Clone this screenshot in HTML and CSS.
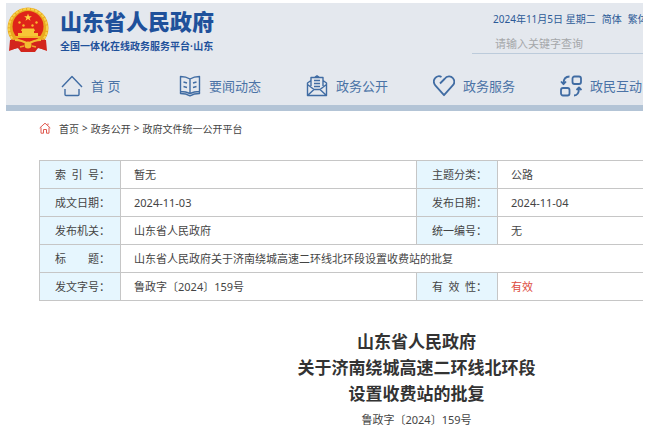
FILE: index.html
```html
<!DOCTYPE html>
<html lang="zh-CN">
<head>
<meta charset="utf-8">
<title>山东省人民政府</title>
<link rel="stylesheet" href="styles.css">
</head>
<body>
<div class="page">
  <header class="header">
    <div class="masthead">
      <a class="brand" href="#">
        <svg class="emblem" viewBox="0 0 42 46" aria-hidden="true">
          <path d="M5 29 L37 29 L39 43 L31 41 L28 45 L14 45 L11 41 L3 43Z" fill="#d3251c"/>
          <circle cx="21" cy="21" r="20.500" fill="#e9a91f"/>
          <circle cx="21" cy="21" r="19" fill="none" stroke="#f7d04a" stroke-width="2" stroke-dasharray="3 1"/>
          <circle cx="21" cy="19.500" r="15.500" fill="#df2419"/>
          <path d="M21 6.500l1 2.700h2.900l-2.300 1.700.9 2.800-2.500-1.700-2.500 1.700.9-2.800-2.300-1.700H20z" fill="#ffd341"/>
          <g fill="#f9b92f"><circle cx="12.500" cy="15.500" r="1.200"/><circle cx="29.500" cy="15.500" r="1.200"/><circle cx="16.500" cy="18.500" r="1.200"/><circle cx="25.500" cy="18.500" r="1.200"/></g>
          <path d="M15 21.500h12l1 2.500h-1v2h4v3H11v-3h4v-2h-1z" fill="#f7c536"/>
          <path d="M8 29h26l-2 2H10z" fill="#f2b52a"/>
          <path d="M3 33c7-1 13 1 18 4 5-3 11-5 18-4l1 11-8-3c-3 0-4 2-5 4H15c-1-2-2-4-5-4l-8 3z" fill="#d3251c"/>
          <path d="M8 33c6 0 10 2 13 4 3-2 7-4 13-4" fill="none" stroke="#f3bd31" stroke-width="2"/>
          <circle cx="21" cy="38" r="3.500" fill="#f3bd31"/>
          <path d="M13 40l4-1M29 40l-4-1" stroke="#f0a82a" stroke-width="1.500"/>
        </svg>
        <span class="brand-text">
          <strong class="brand-name">山东省人民政府</strong>
          <span class="brand-sub">全国一体化在线政务服务平台·山东</span>
        </span>
      </a>
      <div class="tools">
        <div class="meta">
          <span>2024年11月5日 星期二</span>
          <a href="#">简体</a>
          <a href="#">繁体</a>
        </div>
        <input class="search" type="text" aria-label="搜索" placeholder="请输入关键字查询">
      </div>
    </div>
    <nav class="nav">
      <a href="#">
        <svg class="icon" viewBox="0 0 22 22" aria-hidden="true"><path d="M1 12 11 1.500 21 12M4 14v5.500q0 1 1 1h12q1 0 1-1V14"/></svg>
        <span>首 页</span>
      </a>
      <a href="#">
        <svg class="icon" viewBox="0 0 22 22" aria-hidden="true"><path d="M11 4Q7 1.500 1.500 1.500v15Q7 16.500 11 18.500 15 16.500 20.500 16.500v-15Q15 1.500 11 4zv14M1.500 17v1.500Q7 18.500 11 20.800 15 18.500 20.500 18.500V17M4.500 7l3.500 1M4.500 11.500l3.500 1M17.500 7 14 8M17.500 11.500l-3.500 1M11 4v14"/></svg>
        <span>要闻动态</span>
      </a>
      <a href="#">
        <svg class="icon" viewBox="0 0 22 22" aria-hidden="true"><path d="M5 11V2.500h12V11M8 5.500h6M8 8.500h6M8 11.500h6M5 5.500 1.500 8v12.500h19V8L17 5.500M1.500 9.500l6.500 5h6l6.500-5M1.500 20.500l6.500-6M20.500 20.500l-6.500-6M9 2l2-1.200L13 2"/></svg>
        <span>政务公开</span>
      </a>
      <a href="#">
        <svg class="icon icon-bold" viewBox="0 0 22 22" aria-hidden="true"><path d="M7 8.500 11.500 4C14 .5 18 .7 20 3.200c2 2.600 1.300 5.600-.5 7.500L11 20.200 2.500 10.700C.7 8.500.3 5.500 2 3.200 3.700 1 6.500.7 8.500 2"/></svg>
        <span>政务服务</span>
      </a>
      <a href="#">
        <svg class="icon icon-bold" viewBox="0 0 22 22" aria-hidden="true"><rect x="12.500" y="1.500" width="8.500" height="7.500" rx="2"/><rect x="1" y="13" width="8.500" height="7.500" rx="2"/><path d="M9.500 1.500C5.500 1.500 3.500 3.500 3.500 8.500M1 6.500l2.500 2.700L6 6.500M14 20.500c3.500 0 5-2.500 5-7.500M16.500 15 19 12.500l2.500 2.500"/></svg>
        <span>政民互动</span>
      </a>
    </nav>
  </header>
  <main class="content">
    <nav class="crumbs" aria-label="当前位置">
      <svg class="crumb-icon" viewBox="0 0 12 12" aria-hidden="true"><path d="M.7 6 6 1.200 11.300 6M2 5.500v5.700h2.500V7.500h3v3.700H10V5.500M9 3V1.500"/></svg>
      <a href="#">首页</a><span>&gt;</span><a href="#">政务公开</a><span>&gt;</span><a href="#">政府文件统一公开平台</a>
    </nav>
    <table class="info">
      <colgroup><col class="col-label"><col><col class="col-label"><col></colgroup>
      <tbody>
        <tr><th scope="row"><span class="spread"><i>索</i><i>引</i><i>号</i></span>：</th><td>暂无</td><th scope="row">主题分类：</th><td>公路</td></tr>
        <tr><th scope="row">成文日期：</th><td>2024-11-03</td><th scope="row">发布日期：</th><td>2024-11-04</td></tr>
        <tr><th scope="row">发布机关：</th><td>山东省人民政府</td><th scope="row">统一编号：</th><td>无</td></tr>
        <tr><th scope="row"><span class="spread"><i>标</i><i>题</i></span>：</th><td colspan="3">山东省人民政府关于济南绕城高速二环线北环段设置收费站的批复</td></tr>
        <tr><th scope="row">发文字号：</th><td>鲁政字〔2024〕159号</td><th scope="row"><span class="spread"><i>有</i><i>效</i><i>性</i></span>：</th><td class="valid">有效</td></tr>
      </tbody>
    </table>
    <article class="document">
      <h1>山东省人民政府<br>关于济南绕城高速二环线北环段<br>设置收费站的批复</h1>
      <p>鲁政字〔2024〕159号</p>
    </article>
  </main>
</div>
</body>
</html>
```
FILE: styles.css
```css
* {
  box-sizing: border-box;
}

body {
  margin: 0;
  padding: 3px 2px 0 6px;
  background: #fff;
  color: #444;
  font-family: "Noto Sans", "Noto Sans CJK SC", sans-serif;
  font-size: 11px;
}

a {
  color: inherit;
  text-decoration: none;
}

.page {
  overflow: hidden;
}

.header {
  min-width: 788px;
  background: #e4e8ee;
  border-bottom: 6px solid #b3c4d6;
  color: #2c5a97;
}

.masthead {
  display: flex;
  justify-content: space-between;
  height: 64px;
}

.brand {
  display: flex;
  align-items: flex-start;
  gap: 11px;
  padding: 4px 0 0 1px;
  color: #1f519b;
}

.emblem {
  width: 42px;
  height: 46px;
}

.brand-text {
  display: flex;
  flex-direction: column;
  font-family: "Liberation Sans", "Noto Sans CJK SC", sans-serif;
  font-weight: 700;
}

.brand-name {
  font-size: 22px;
  line-height: 32px;
}

.brand-sub {
  font-size: 10px;
  line-height: 16px;
}

.tools {
  width: 322px;
}

.meta {
  display: flex;
  gap: 6px;
  padding: 8px 0 0 21px;
  font-size: 10px;
  line-height: 16px;
}

.search {
  display: block;
  width: 100%;
  height: 20px;
  margin-top: 7px;
  padding: 0 0 0 23px;
  border: 0;
  border-bottom: 1px solid #bccbdb;
  background: transparent;
  font: inherit;
}

.search::placeholder {
  color: #a5a7aa;
}

.nav {
  display: flex;
  gap: 45px;
  padding: 8px 0 8px 55px;
  color: #4b73a6;
  font-size: 13px;
  line-height: 22px;
}

.nav a {
  display: flex;
  gap: 8px;
  min-width: 73px;
}

.icon {
  width: 22px;
  height: 22px;
  fill: none;
  stroke: #406ca3;
  stroke-width: 1.4;
  stroke-linejoin: round;
}

.icon-bold {
  stroke-width: 1.8;
}

.content {
  width: 788px;
  padding: 7px 0 0 33px;
}

.crumbs {
  display: flex;
  align-items: center;
  gap: 3px;
  height: 20px;
  font-size: 10px;
}

.crumb-icon {
  width: 12px;
  height: 12px;
  margin-right: 5px;
  fill: none;
  stroke: #e05a50;
}

.info {
  width: 100%;
  margin-top: 22px;
  border-collapse: collapse;
  table-layout: fixed;
}

.col-label {
  width: 81px;
}

.info th,
.info td {
  height: 28px;
  padding: 0 0 0 13px;
  border: 1px solid #c6c6c6;
  font-weight: 400;
  line-height: 16px;
  text-align: left;
}

.info th {
  padding-left: 15px;
  background: #e6f6fe;
  white-space: nowrap;
}

.spread {
  display: inline-flex;
  justify-content: space-between;
  width: 44px;
}

.spread i {
  font-style: normal;
}

.info .valid {
  color: #dc4b40;
}

.document {
  padding-top: 28px;
  text-align: center;
}

.document h1 {
  margin: 0;
  color: #333;
  font-size: 17px;
  line-height: 26px;
}

.document p {
  margin: 4px 0 0;
  line-height: 18px;
}
```
